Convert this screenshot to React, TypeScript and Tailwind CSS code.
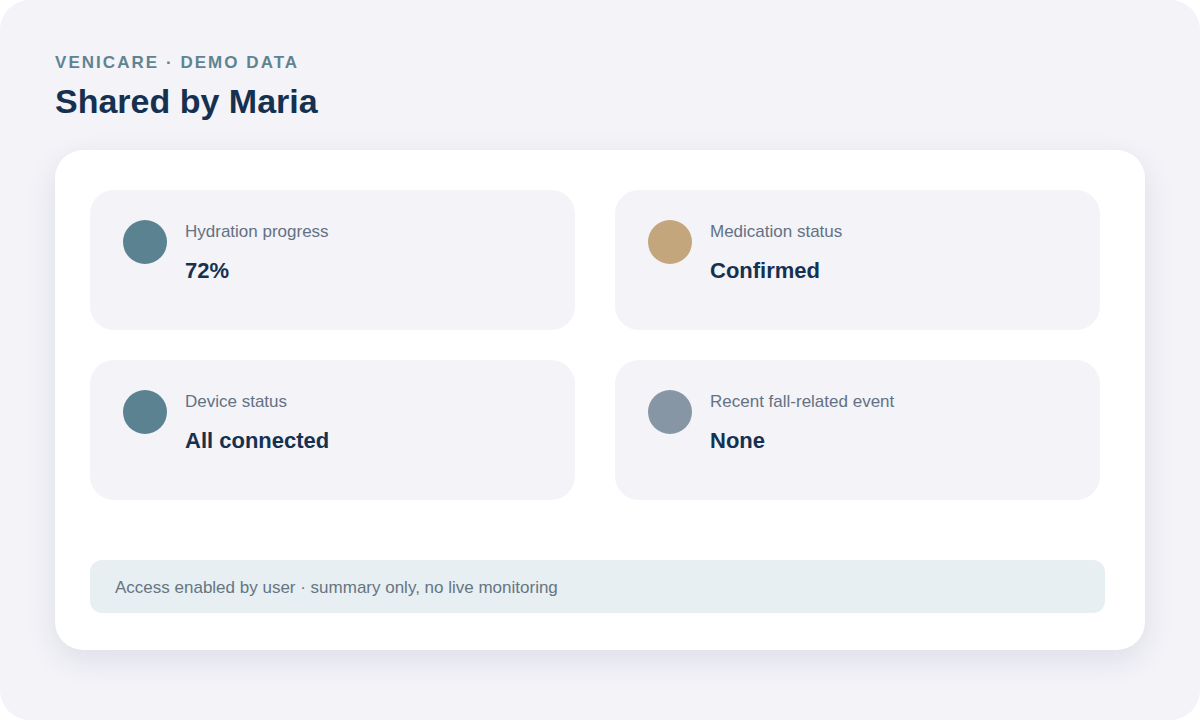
const stats = [
  { label: 'Hydration progress', value: '72%', dot: 'bg-[#5b8291]' },
  { label: 'Medication status', value: 'Confirmed', dot: 'bg-[#c4a67c]' },
  { label: 'Device status', value: 'All connected', dot: 'bg-[#5b8291]' },
  { label: 'Recent fall-related event', value: 'None', dot: 'bg-[#8796a5]' },
];

export default function App() {
  return (
    <div className="w-[1200px] h-[720px] bg-white font-['Liberation_Sans',Arial,sans-serif]">
      <div className="w-full h-full rounded-[30px] bg-[#f3f3f8] px-[55px] pt-[53px]">
        <div className="text-[17px] font-bold tracking-[0.12em] text-[#5f8491] leading-5">VENICARE · DEMO DATA</div>
        <h1 className="mt-[8px] text-[34px] font-bold text-[#163150] leading-[40px]">Shared by Maria</h1>

        <div className="mt-[29px] w-[1090px] h-[500px] rounded-[28px] bg-white shadow-[0_10px_30px_rgba(40,45,90,0.10)] pl-[35px] pr-[40px] pt-[40px]">
          <div className="grid grid-cols-2 gap-x-[40px] gap-y-[30px] w-[1010px]">
            {stats.map((s) => (
              <div key={s.label} className="h-[140px] rounded-[24px] bg-[#f3f3f8] pl-[33px] pt-[30px] flex gap-[18px]">
                <div className={`w-[44px] h-[44px] rounded-full shrink-0 ${s.dot}`} />
                <div>
                  <div className="text-[17px] text-[#637184] leading-5 mt-[2px]">{s.label}</div>
                  <div className="mt-[17px] text-[22px] font-bold text-[#163150] leading-6">{s.value}</div>
                </div>
              </div>
            ))}
          </div>

          <div className="mt-[60px] h-[53px] rounded-[12px] bg-[#e7eff2] px-[25px] pt-[3px] flex items-center text-[17px] text-[#667582]">
            Access enabled by user · summary only, no live monitoring
          </div>
        </div>
      </div>
    </div>
  );
}
